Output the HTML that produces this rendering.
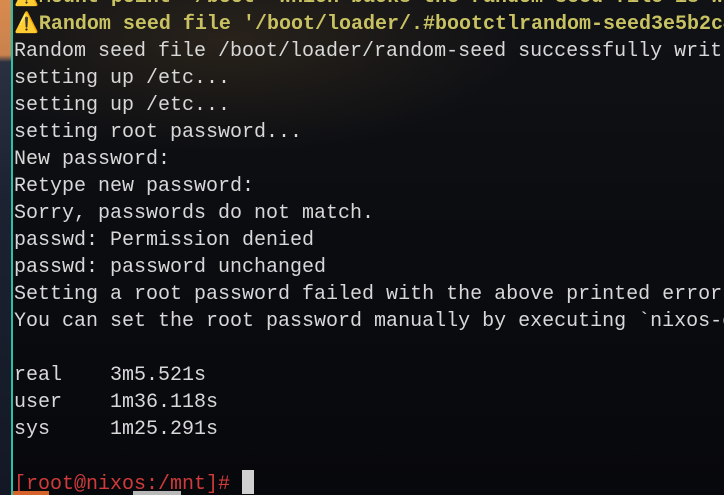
<!DOCTYPE html>
<html><head><meta charset="utf-8"><style>
html,body{margin:0;padding:0;}
body{width:724px;height:495px;overflow:hidden;position:relative;
background:radial-gradient(ellipse 420px 160px at 230px 40px, rgba(60,48,30,0.55), rgba(0,0,0,0) 70%), linear-gradient(180deg,#111216 0%,#0b0d11 40%,#07080c 100%);}
.strip{position:absolute;left:0;top:0;width:11px;height:495px;background:linear-gradient(180deg,#d98a4e 0px,#c9824e 55px,#2a3040 62px,#1c2231 200px,#141824 495px);}
.border{position:absolute;left:11px;top:0;width:2px;height:495px;background:#2cc1a6;}
.t{position:absolute;left:14px;top:-16px;width:710px;height:511px;overflow:hidden;font-family:"Liberation Mono","DejaVu Sans Mono",monospace;font-size:20px;line-height:27px;color:#d8d8d8;white-space:pre;}
.y{color:#c8c262;font-weight:bold;}
.r{color:#d03a3a;}
.cur{display:inline-block;width:12px;height:24px;background:#d0d0d0;vertical-align:-5px;}
.b1{position:absolute;left:13px;top:491px;width:36px;height:4px;background:#d4622a;}
.b2{position:absolute;left:133px;top:491px;width:48px;height:4px;background:#b8b8b8;}
</style></head><body>
<div class="strip"></div><div class="border"></div>
<div class="t"><span class="y">⚠️Mount point '/boot' which backs the random seed file is world accessible</span>
<span class="y">⚠️Random seed file '/boot/loader/.#bootctlrandom-seed3e5b2c4e'</span>
Random seed file /boot/loader/random-seed successfully written
setting up /etc...
setting up /etc...
setting root password...
New password:
Retype new password:
Sorry, passwords do not match.
passwd: Permission denied
passwd: password unchanged
Setting a root password failed with the above printed error.
You can set the root password manually by executing `nixos-enter`

real    3m5.521s
user    1m36.118s
sys     1m25.291s

<span class="r">[root@nixos:/mnt]#</span> <span class="cur"></span></div>
<div class="b1"></div><div class="b2"></div>
</body></html>
